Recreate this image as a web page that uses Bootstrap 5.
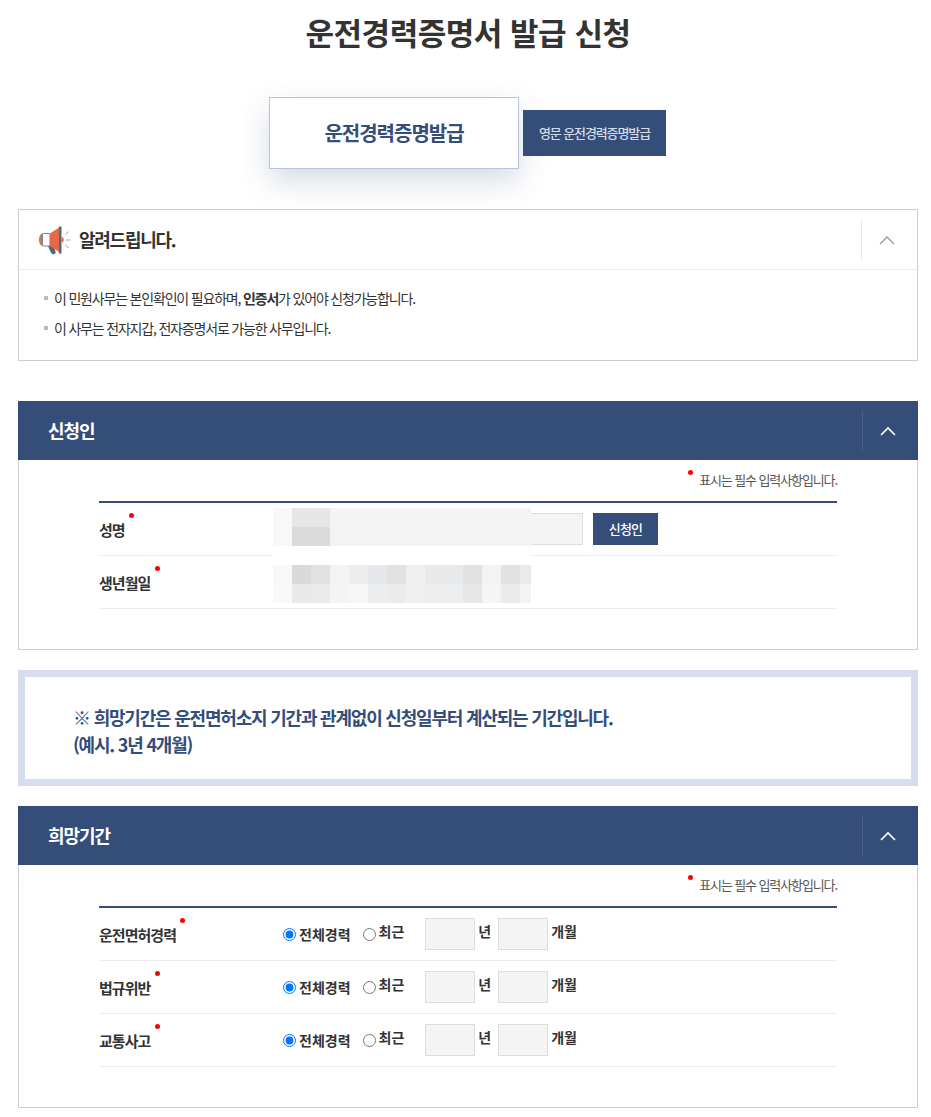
<!DOCTYPE html>
<html lang="ko">
<head>
    <meta charset="UTF-8">
    <meta name="viewport" content="width=device-width, initial-scale=1.0">
    <title>운전경력증명서 발급 신청</title>
    <link href="https://cdn.jsdelivr.net/npm/bootstrap@5.3.0/dist/css/bootstrap.min.css" rel="stylesheet">
    <style>
        body { font-family: "Noto Sans CJK KR", "Noto Sans", sans-serif; color: #333; letter-spacing: -0.05em; background: #fff; }
        .page-wrap { padding: 0 13px 0 18px; }
        .page-title { font-size: 31px; font-weight: 700; line-height: 46px; padding-top: 9px; margin: 0; letter-spacing: -0.015em; color: #333; }
        .tab-row { height: 154px; padding-top: 42px; }
        .tab-main { width: 250px; height: 72px; border: 1px solid #b8c4dc; background: #fff; color: #344d79; font-size: 20px; font-weight: 700; box-shadow: 0 12px 30px rgba(52,77,121,.2); margin-left: 251px; letter-spacing: -0.05em; }
        .tab-sub { width: 143px; height: 46px; margin: 13px 0 0 4px; background: #344d79; color: #d5dbe6; font-size: 13px; font-weight: 500; letter-spacing: -0.085em; }
        .info-box { height: 152px; border: 1px solid #ccc; }
        .info-head { height: 60px; border-bottom: 1px solid #ececec; padding-left: 20px; }
        .info-head h2 { font-size: 18px; font-weight: 700; margin: 0 0 0 8px; color: #333; letter-spacing: -0.07em; }
        .collapse-cell { width: 56px; height: 40px; border-left: 1px solid #e8e8e8; padding-right: 6px; }
        .info-list { padding: 13px 0 0 25px; margin: 0; list-style: none; font-size: 14px; line-height: 30px; letter-spacing: -0.085em; }
        .info-list li { padding-left: 10px; position: relative; }
        .info-list li::before { content: ""; position: absolute; left: 0; top: 13px; width: 4px; height: 4px; background: #bbb; }
        .sec-head { height: 59px; background: #344d79; color: #fff; padding-left: 30px; }
        .sec-head h2 { font-size: 18px; font-weight: 700; margin: 0; letter-spacing: -0.06em; }
        .sec-head .collapse-cell { border-left-color: #4a6088; }
        .sec-first { margin-top: 40px; }
        .sec-body { border: 1px solid #ccc; border-top: 0; padding: 0 80px; }
        .sec-body-a { height: 190px; }
        .sec-body-b { height: 243px; }
        .req-note { height: 41px; font-size: 13px; color: #555; padding-top: 10px; line-height: 20px; letter-spacing: -0.085em; }
        .req-note span { position: relative; }
        .req-dot { display: inline-block; width: 5px; height: 5px; border-radius: 50%; background: #f00; position: absolute; }
        .req-note .req-dot { left: -11px; top: 0; }
        .form-rows { border-top: 2px solid #344d79; position: relative; }
        .form-line { height: 53px; border-bottom: 1px solid #ececec; }
        .form-label-x { width: 174px; font-size: 15px; font-weight: 700; color: #333; padding-top: 3px; letter-spacing: -0.065em; }
        .form-label-x span { position: relative; }
        .form-label-x .req-dot { top: -6px; }
        .field-x { width: 50px; height: 32px; background: #f4f4f4; border: 1px solid #ddd; border-radius: 0; padding: 0; display: block; }
        .name-input { width: 310px; }
        .apply-btn { width: 65px; height: 32px; background: #344d79; color: #fff; font-size: 13px; font-weight: 500; margin-left: 10px; }
        .blur-grid { position: absolute; left: 174px; top: 5px; display: grid; grid-template-columns: repeat(13, 19px) 11px; grid-auto-rows: 19px; }
        .radio-line { padding-left: 10px; font-size: 14px; font-weight: 700; letter-spacing: 0; }
        .radio-line input[type=radio] { width: 13px; height: 13px; margin: 0; }
        .radio-line input[type=radio].radio-next { margin-left: 12px; }
        .radio-line .field-first { margin-left: 21px; }
        .radio-text { margin-left: 3px; }
        .notice-box { height: 116px; border: 7px solid #d5ddee; margin: 20px 0; color: #344d79; font-size: 18px; font-weight: 700; line-height: 27px; padding: 27px 0 0 48px; letter-spacing: -0.067em; }
        .unit-x { line-height: 28px; position: relative; top: -3px; }
        .unit-gap { margin-right: 7px; }
    </style>
</head>
<body>
    <div class="page-wrap">
        <h1 class="page-title text-center">운전경력증명서 발급 신청</h1>

        <div class="tab-row d-flex align-items-start">
            <div class="tab-main d-flex align-items-center justify-content-center">운전경력증명발급</div>
            <div class="tab-sub d-flex align-items-center justify-content-center">영문 운전경력증명발급</div>
        </div>

        <div class="info-box">
            <div class="info-head d-flex align-items-center">
                <svg width="32" height="30" viewBox="0 0 32 30">
                    <path d="M8 19h6l2.500 7.500c.5 1.600-.5 2.800-2 2.800-1.300 0-2.200-.7-2.700-2z" fill="#56677a"/>
                    <path d="M4 8.500v12.500c-2.500 0-4-2.800-4-6.200S1.500 8.500 4 8.500z" fill="#e8684a"/>
                    <path d="M3.500 8.500h7.500v12.500H3.500z" fill="#fff" stroke="#7d8796" stroke-width="1"/>
                    <path d="M11 8.500l9-6v24.500l-9-6z" fill="#e8684a"/>
                    <path d="M20 1.500h2.500v27H20z" fill="#56677a"/>
                    <path d="M22.500 12c1.500 0 2.300 1.200 2.300 2.800s-.8 2.800-2.300 2.800z" fill="#e8684a"/>
                    <path d="M26.500 9.500l3-3M27 15h4.500M26.500 20l3 3" stroke="#9aa3ae" stroke-width="1" fill="none"/>
                </svg>
                <h2>알려드립니다.</h2>
                <div class="collapse-cell d-flex align-items-center justify-content-center ms-auto">
                    <svg width="16" height="10" viewBox="0 0 16 10"><path d="M1 9l7-7 7 7" fill="none" stroke="#999" stroke-width="1.300"/></svg>
                </div>
            </div>
            <ul class="info-list">
                <li>이 민원사무는 본인확인이 필요하며, <b>인증서</b>가 있어야 신청가능합니다.</li>
                <li>이 사무는 전자지갑, 전자증명서로 가능한 사무입니다.</li>
            </ul>
        </div>

        <div class="sec-first sec-head d-flex align-items-center">
            <h2>신청인</h2>
            <div class="collapse-cell d-flex align-items-center justify-content-center ms-auto">
                <svg width="16" height="10" viewBox="0 0 16 10"><path d="M1 9l7-7 7 7" fill="none" stroke="#fff" stroke-width="1.600"/></svg>
            </div>
        </div>
        <div class="sec-body sec-body-a">
            <div class="req-note text-end"><span><i class="req-dot"></i>표시는 필수 입력사항입니다.</span></div>
            <div class="form-rows">
                <div class="form-line d-flex align-items-center">
                    <div class="form-label-x"><span>성명<i class="req-dot" style="left:30px"></i></span></div>
                    <input class="field-x name-input" type="text" aria-label="성명">
                    <div class="apply-btn d-flex align-items-center justify-content-center">신청인</div>
                </div>
                <div class="form-line d-flex align-items-center">
                    <div class="form-label-x"><span>생년월일<i class="req-dot" style="left:56px"></i></span></div>
                </div>
                <div class="blur-grid" id="blurGrid"></div>
            </div>
        </div>

        <div class="notice-box">※ 희망기간은 운전면허소지 기간과 관계없이 신청일부터 계산되는 기간입니다.<br>(예시. 3년 4개월)</div>

        <div class="sec-head d-flex align-items-center">
            <h2>희망기간</h2>
            <div class="collapse-cell d-flex align-items-center justify-content-center ms-auto">
                <svg width="16" height="10" viewBox="0 0 16 10"><path d="M1 9l7-7 7 7" fill="none" stroke="#fff" stroke-width="1.600"/></svg>
            </div>
        </div>
        <div class="sec-body sec-body-b">
            <div class="req-note text-end"><span><i class="req-dot"></i>표시는 필수 입력사항입니다.</span></div>
            <div class="form-rows" id="periodRows"></div>
        </div>
    </div>

    <script src="https://cdn.jsdelivr.net/npm/bootstrap@5.3.0/dist/js/bootstrap.bundle.min.js"></script>
    <script>
        // 모자이크 처리된 칸
        const blurRows = [
            ['f8f8f8','e6e6e6','e6e6e6','f4f4f4','f4f4f4','f4f4f4','f4f4f4','f4f4f4','f4f4f4','f4f4f4','f4f4f4','f4f4f4','f4f4f4','f4f4f4'],
            ['f8f8f8','dbdbdb','dbdbdb','f3f3f3','f3f3f3','f3f3f3','f3f3f3','f3f3f3','f3f3f3','f3f3f3','f3f3f3','f3f3f3','f3f3f3','f3f3f3'],
            ['ffffff','ffffff','ffffff','ffffff','ffffff','ffffff','ffffff','ffffff','ffffff','ffffff','ffffff','ffffff','ffffff','ffffff'],
            ['f8f8f8','d9d9d7','e0e1e3','f3f3f3','eeeced','e6e7ea','e2e2e0','efefef','ebe9e7','e8e9eb','e1e1e1','f3f3f3','e3e2e0','e9eaec'],
            ['f9f9f9','e9e9e9','ebebeb','f4f4f4','f6f6f4','ecedee','ebebeb','f0f0f0','edeeee','edeef0','e6e7e6','f5f5f5','ebebeb','f2f3f5']
        ];
        const blurGrid = document.getElementById('blurGrid');
        blurRows.forEach(row => {
            row.forEach(color => {
                blurGrid.innerHTML += `<div style="background:#${color}"></div>`;
            });
        });

        const periodRows = document.getElementById('periodRows');
        [['운전면허경력', 81], ['법규위반', 56], ['교통사고', 56]].forEach(([label, dot], i) => {
            const name = 'period' + i;
            periodRows.innerHTML += `
                <div class="form-line d-flex align-items-center">
                    <div class="form-label-x"><span>${label}<i class="req-dot" style="left:${dot}px"></i></span></div>
                    <div class="radio-line d-flex align-items-center">
                        <input type="radio" name="${name}" checked aria-label="전체경력"><span class="radio-text">전체경력</span>
                        <input type="radio" name="${name}" class="radio-next" aria-label="최근"><span class="radio-text unit-x">최근</span>
                        <input class="field-x field-first" type="text" aria-label="년"><span class="radio-text unit-x unit-gap">년</span>
                        <input class="field-x" type="text" aria-label="개월"><span class="radio-text unit-x">개월</span>
                    </div>
                </div>`;
        });
    </script>
</body>
</html>
